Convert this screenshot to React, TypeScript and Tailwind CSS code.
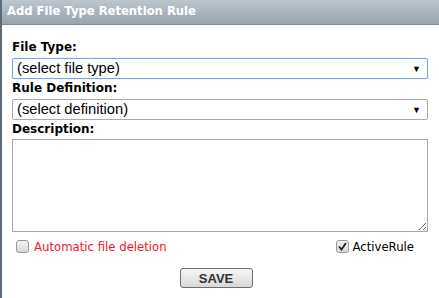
import React from "react";

export default function App() {
  return (
    <div className="w-[439px] h-[298px] bg-white overflow-hidden border-l-2 border-[#5d6b78] flex flex-col">
      <div className="h-[25px] shrink-0 bg-gradient-to-b from-[#bcc6cf] to-[#98a3ae] border-b border-[#7c8792] flex items-center pl-[5px]">
        <span className="text-white font-bold text-[11.6px] [font-family:'DejaVu_Sans',sans-serif]">
          Add File Type Retention Rule
        </span>
      </div>
      <div className="flex flex-col pl-[10px] pr-[11px] pt-[14px]">
        <label className="text-[12px] font-bold text-black leading-[16px] [font-family:'DejaVu_Sans',sans-serif]">
          File Type:
        </label>
        <div className="mt-[3px] h-[21px] border border-[#7aa7e4] rounded-[2px] flex items-center justify-between px-[4px] shadow-[0_0_1px_#7aa7e4]">
          <span className="text-[14.7px] text-black [font-family:'Liberation_Sans',sans-serif]">(select file type)</span>
          <span className="text-[9px] mr-[2px]">▼</span>
        </div>
        <label className="mt-[1px] text-[12px] font-bold text-black leading-[16px] [font-family:'DejaVu_Sans',sans-serif]">
          Rule Definition:
        </label>
        <div className="mt-[3px] h-[21px] border border-[#a9a9a9] rounded-[2px] flex items-center justify-between px-[4px]">
          <span className="text-[14.7px] text-black [font-family:'Liberation_Sans',sans-serif]">(select definition)</span>
          <span className="text-[9px] mr-[2px]">▼</span>
        </div>
        <label className="mt-[1px] text-[12px] font-bold text-black leading-[16px] [font-family:'DejaVu_Sans',sans-serif]">
          Description:
        </label>
        <textarea className="mt-[2px] h-[93px] border border-[#a9a9a9] resize-y outline-none" />
        <div className="mt-[6px] h-[17px] flex items-center justify-between">
          <div className="flex items-center">
            <span className="ml-[4px] w-[13px] h-[13px] rounded-[3px] border border-[#9a9a9a] bg-gradient-to-b from-[#f4f4f4] to-[#d8d8d8]" />
            <span className="ml-[5px] text-[13px] text-[#f2142a] [font-family:'DejaVu_Sans_Condensed',sans-serif]">
              Automatic file deletion
            </span>
          </div>
          <div className="flex items-center mr-[14px]">
            <span className="w-[13px] h-[13px] rounded-[3px] border border-[#9a9a9a] bg-gradient-to-b from-[#f4f4f4] to-[#d8d8d8] flex items-center justify-center">
              <svg width="9" height="9" viewBox="0 0 9 9">
                <path d="M1 4.5 L3.5 7.5 L8 1" stroke="#222" strokeWidth="1.8" fill="none" />
              </svg>
            </span>
            <span className="ml-[3px] text-[13px] text-black [font-family:'DejaVu_Sans_Condensed',sans-serif]">ActiveRule</span>
          </div>
        </div>
        <div className="mt-[13px] flex justify-center pr-[8px]">
          <button className="w-[73px] h-[20px] rounded-[3px] border border-[#6d6d6d] bg-gradient-to-b from-[#f6f6f6] to-[#d9d9d9] text-[13px] font-bold text-[#333] [font-family:'Liberation_Sans',sans-serif] leading-none">
            SAVE
          </button>
        </div>
      </div>
    </div>
  );
}
